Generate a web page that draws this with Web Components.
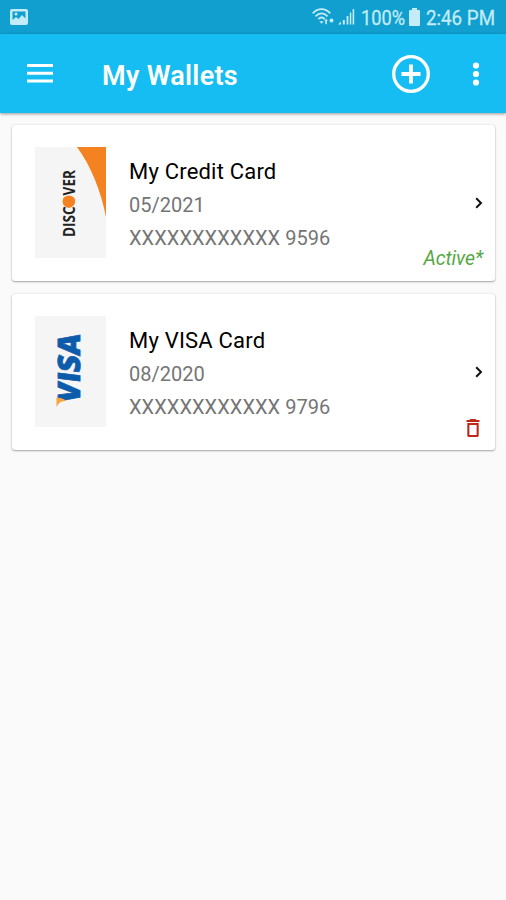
<!DOCTYPE html>
<html lang="en">
<head>
  <meta charset="utf-8">
  <meta name="viewport" content="width=device-width, initial-scale=1">
  <title>My Wallets</title>
  <style>
    body {
      margin: 0;
      min-height: 100vh;
      background: #fafafa;
      font-family: Roboto, sans-serif;
    }
  </style>
</head>
<body>
  <status-bar></status-bar>
  <app-bar>My Wallets</app-bar>
  <wallet-list>
    <wallet-card expiry="05/2021" number="XXXXXXXXXXXX 9596">
      <brand-logo slot="logo" brand="discover"></brand-logo>
      My Credit Card
      <active-label slot="action">Active*</active-label>
    </wallet-card>
    <wallet-card expiry="08/2020" number="XXXXXXXXXXXX 9796">
      <brand-logo slot="logo" brand="visa"></brand-logo>
      My VISA Card
      <delete-button slot="action"></delete-button>
    </wallet-card>
  </wallet-list>

  <script>
    class StatusBar extends HTMLElement {
      constructor() {
        super();
        this.shadowDOM = this.attachShadow({mode: 'open'});
      }

      connectedCallback() {
        this.render();
      }

      render() {
        this.shadowDOM.innerHTML = `
          <style>
            :host {
              display: flex;
              align-items: center;
              height: 34px;
              padding: 0 9px 0 10px;
              box-sizing: border-box;
              background: #109fce;
              color: #c3ebf8;
            }
            svg { display: block; fill: currentColor; flex: none; overflow: visible; }
            .space { flex: 1; }
            .signal { margin-left: 4px; }
            .percent { margin-left: 4px; }
            .battery { margin: 0 4px 0 2px; }
            text { font: 20px Roboto, sans-serif; stroke: currentColor; stroke-width: .3; }
          </style>
          <svg width="18" height="16" viewBox="0 0 18 16">
            <path fill-rule="evenodd" d="M2 0h14a2 2 0 0 1 2 2v12a2 2 0 0 1-2 2H2a2 2 0 0 1-2-2V2a2 2 0 0 1 2-2zM2.500 2.500v8.500l3.500-3 2.500 2 3.500-4 3.500 3.500v-7z"/>
            <circle cx="6" cy="5" r="1.500"/>
          </svg>
          <div class="space"></div>
          <svg width="22" height="18" viewBox="0 0 22 18">
            <g fill="none" stroke="currentColor" stroke-width="1.800">
              <path d="M.7 5.300C6-.2 13-.2 18.300 5.300"/>
              <path d="M3.500 8.300c3.700-3.800 8.300-3.800 12 0"/>
              <path d="M6.300 11.200c2-2 4.500-2 6.500 0"/>
            </g>
            <path d="M7.300 13.200h4.400l-2.200 2.600zM12.300 12.800l1.800-2 1.800 2h-1v3.500h-1.600v-3.500z"/>
            <circle cx="19.500" cy="12.500" r="2"/>
          </svg>
          <svg class="signal" width="17" height="18" viewBox="0 0 17 18">
            <path d="M0 16.500l3-3v3zM4.800 12h2v4.500h-2zM8.600 8h1.800v8.500H8.600zM11.800 4.500h1.500v12h-1.500zM14.600 1H16.200v15.500h-1.600z"/>
          </svg>
          <svg class="percent" width="48" height="34" viewBox="-2 0 48 34">
            <text x="0" y="24.800" textLength="44" lengthAdjust="spacingAndGlyphs">100%</text>
          </svg>
          <svg class="battery" width="11" height="18" viewBox="0 0 11 18">
            <path d="M3 0h5v2h2a1 1 0 0 1 1 1v14a1 1 0 0 1-1 1H1a1 1 0 0 1-1-1V3a1 1 0 0 1 1-1h2z"/>
          </svg>
          <svg width="73" height="34" viewBox="-2 0 73 34">
            <text x="0" y="24.800" textLength="69" lengthAdjust="spacingAndGlyphs">2:46 PM</text>
          </svg>
        `;
      }
    }

    class AppBar extends HTMLElement {
      constructor() {
        super();
        this.shadowDOM = this.attachShadow({mode: 'open'});
      }

      connectedCallback() {
        this.render();
      }

      render() {
        this.shadowDOM.innerHTML = `
          <style>
            :host {
              display: flex;
              align-items: center;
              height: 79px;
              padding: 0 25px 0 27px;
              box-sizing: border-box;
              background: #15bdf2;
              color: #fff;
              box-shadow: 0 1px 3px rgba(0, 0, 0, .4);
            }
            h1 {
              flex: 1;
              margin: 4px 0 0 49px;
              font-size: 27px;
              font-weight: 600;
              letter-spacing: .3px;
              line-height: 32px;
            }
            button {
              display: block;
              padding: 0;
              border: 0;
              background: none;
              color: inherit;
            }
            svg { display: block; }
            .more { margin-left: 41px; }
          </style>
          <button aria-label="Menu">
            <svg width="26" height="20" viewBox="0 0 26 20" fill="currentColor">
              <path d="M0 0h26v3H0zM0 7.700h26v3H0zM0 15.500h26v3H0z"/>
            </svg>
          </button>
          <h1><slot></slot></h1>
          <button aria-label="Add">
            <svg width="38" height="38" viewBox="0 0 38 38" fill="none" stroke="currentColor">
              <circle cx="19" cy="19" r="17.300" stroke-width="3.300"/>
              <path d="M19 9.500v19M9.500 19h19" stroke-width="3.800"/>
            </svg>
          </button>
          <button class="more" aria-label="More">
            <svg width="10" height="24" viewBox="0 0 10 24" fill="currentColor">
              <circle cx="5" cy="3.500" r="3.100"/>
              <circle cx="5" cy="12" r="3.100"/>
              <circle cx="5" cy="20.500" r="3.100"/>
            </svg>
          </button>
        `;
      }
    }

    class WalletList extends HTMLElement {
      constructor() {
        super();
        this.shadowDOM = this.attachShadow({mode: 'open'});
      }

      connectedCallback() {
        this.shadowDOM.innerHTML = `
          <style>
            :host {
              display: flex;
              flex-direction: column;
              gap: 13px;
              padding: 12px 11px 12px 12px;
            }
          </style>
          <slot></slot>
        `;
      }
    }

    class WalletCard extends HTMLElement {
      constructor() {
        super();
        this.shadowDOM = this.attachShadow({mode: 'open'});
      }

      connectedCallback() {
        this.render();
      }

      render() {
        this.shadowDOM.innerHTML = `
          <style>
            :host {
              display: flex;
              height: 156px;
              padding: 22px 11px 0 23px;
              box-sizing: border-box;
              border-radius: 3px;
              background: #fff;
              box-shadow: 0 1px 2px rgba(0, 0, 0, .32), 0 0 2px rgba(0, 0, 0, .12);
            }
            .info {
              flex: 1;
              padding: 8px 0 0 23px;
              color: #757575;
              font-size: 20px;
              line-height: 33px;
              white-space: nowrap;
            }
            .name {
              height: 34px;
              color: #000;
              font-size: 22px;
              letter-spacing: .2px;
            }
            .number { letter-spacing: .06px; }
            .side {
              display: flex;
              flex-direction: column;
              align-items: flex-end;
              justify-content: space-between;
              padding: 50px 0 12px;
            }
            .arrow { display: block; margin-right: 1px; }
          </style>
          <slot name="logo"></slot>
          <div class="info">
            <div class="name"><slot></slot></div>
            <div class="expiry">${this.getAttribute('expiry')}</div>
            <div class="number">${this.getAttribute('number')}</div>
          </div>
          <div class="side">
            <svg class="arrow" width="8" height="12" viewBox="0 0 8 12" fill="none" stroke="#111" stroke-width="2">
              <path d="M1.200 1.200L6 6 1.200 10.800"/>
            </svg>
            <slot name="action"></slot>
          </div>
        `;
      }
    }

    const LOGOS = {
      discover: `
        <path fill="#f58220" d="M42 0h29v70C66 44 56 19 42 0z"/>
        <g class="discover" transform="translate(40 90) rotate(-90)">
          <text textLength="67" lengthAdjust="spacingAndGlyphs">DISC<tspan fill="#f58220">O</tspan>VER</text>
          <circle cx="35.300" cy="-6.200" r="6.200" fill="#f58220"/>
        </g>
      `,
      visa: `
        <g transform="translate(44.500 88) rotate(-90) skewX(-7)">
          <text class="visa" textLength="69" lengthAdjust="spacingAndGlyphs">VISA</text>
        </g>
        <path fill="#f7a540" d="M21.500 91v-9.500c4 .3 7.500 1.200 10 3.500-5-.5-8 1.500-10 6z"/>
      `
    };

    class BrandLogo extends HTMLElement {
      constructor() {
        super();
        this.shadowDOM = this.attachShadow({mode: 'open'});
      }

      connectedCallback() {
        this.shadowDOM.innerHTML = `
          <style>
            :host {
              display: block;
              flex: none;
              width: 71px;
              height: 111px;
              background: #f5f5f5;
            }
            svg { display: block; }
            .discover { font: 700 16.500px "Open Sans", sans-serif; fill: #222; }
            .visa {
              font: 800 31px "Open Sans", sans-serif;
              fill: #0c5cab;
              stroke: #0c5cab;
              stroke-width: .7;
            }
          </style>
          <svg width="71" height="111" viewBox="0 0 71 111">${LOGOS[this.getAttribute('brand')]}</svg>
        `;
      }
    }

    class ActiveLabel extends HTMLElement {
      constructor() {
        super();
        this.shadowDOM = this.attachShadow({mode: 'open'});
      }

      connectedCallback() {
        this.shadowDOM.innerHTML = `
          <style>
            :host {
              display: block;
              margin: 0 1px -1px 0;
              color: #55a844;
              font-size: 19.500px;
              font-style: italic;
              letter-spacing: -.1px;
              line-height: 22px;
            }
          </style>
          <slot></slot>
        `;
      }
    }

    class DeleteButton extends HTMLElement {
      constructor() {
        super();
        this.shadowDOM = this.attachShadow({mode: 'open'});
      }

      connectedCallback() {
        this.shadowDOM.innerHTML = `
          <style>
            :host { display: block; margin: 0 4px 1px 0; }
            button { display: block; padding: 0; border: 0; background: none; }
            svg { display: block; }
          </style>
          <button aria-label="Delete">
            <svg width="14" height="18" viewBox="0 0 14 18">
              <path fill="#bf2718" fill-rule="evenodd" d="M4.500 0h5l1 1H13.500v2H.5V1h3zM1.300 4h11.400v12.500a1.500 1.500 0 0 1-1.500 1.500H2.800a1.500 1.500 0 0 1-1.500-1.500zM3.400 6v10h7.200V6z"/>
            </svg>
          </button>
        `;
      }
    }

    customElements.define('status-bar', StatusBar);
    customElements.define('app-bar', AppBar);
    customElements.define('wallet-list', WalletList);
    customElements.define('wallet-card', WalletCard);
    customElements.define('brand-logo', BrandLogo);
    customElements.define('active-label', ActiveLabel);
    customElements.define('delete-button', DeleteButton);
  </script>
</body>
</html>
